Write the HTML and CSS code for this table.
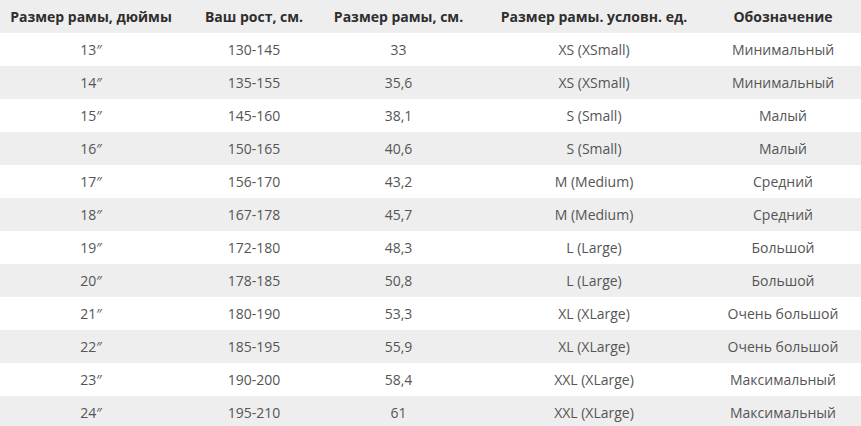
FILE: index.html
```html
<!DOCTYPE html>
<html lang="ru">
<head>
<meta charset="utf-8">
<link rel="stylesheet" href="styles.css">
</head>
<body>
<table class="sizes">
  <colgroup>
    <col class="c1"><col class="c2"><col class="c3"><col class="c4"><col class="c5">
  </colgroup>
  <thead>
    <tr><th>Размер рамы, дюймы</th><th>Ваш рост, см.</th><th>Размер рамы, см.</th><th>Размер рамы. условн. ед.</th><th class="last">Обозначение</th></tr>
  </thead>
  <tbody>
    <tr><td>13″</td><td>130-145</td><td>33</td><td>XS (XSmall)</td><td class="last">Минимальный</td></tr>
    <tr><td>14″</td><td>135-155</td><td>35,6</td><td>XS (XSmall)</td><td class="last">Минимальный</td></tr>
    <tr><td>15″</td><td>145-160</td><td>38,1</td><td>S (Small)</td><td class="last">Малый</td></tr>
    <tr><td>16″</td><td>150-165</td><td>40,6</td><td>S (Small)</td><td class="last">Малый</td></tr>
    <tr><td>17″</td><td>156-170</td><td>43,2</td><td>M (Medium)</td><td class="last">Средний</td></tr>
    <tr><td>18″</td><td>167-178</td><td>45,7</td><td>M (Medium)</td><td class="last">Средний</td></tr>
    <tr><td>19″</td><td>172-180</td><td>48,3</td><td>L (Large)</td><td class="last">Большой</td></tr>
    <tr><td>20″</td><td>178-185</td><td>50,8</td><td>L (Large)</td><td class="last">Большой</td></tr>
    <tr><td>21″</td><td>180-190</td><td>53,3</td><td>XL (XLarge)</td><td class="last">Очень большой</td></tr>
    <tr><td>22″</td><td>185-195</td><td>55,9</td><td>XL (XLarge)</td><td class="last">Очень большой</td></tr>
    <tr><td>23″</td><td>190-200</td><td>58,4</td><td>XXL (XLarge)</td><td class="last">Максимальный</td></tr>
    <tr><td>24″</td><td>195-210</td><td>61</td><td>XXL (XLarge)</td><td class="last">Максимальный</td></tr>
  </tbody>
</table>
</body>
</html>
```

FILE: styles.css
```css
html, body {
  margin: 0;
  padding: 0;
  background: #fff;
}
.sizes {
  width: 861px;
  border-collapse: collapse;
  table-layout: fixed;
  font-family: "Open Sans", "Liberation Sans", sans-serif;
  font-size: 14px;
  color: #555;
}
.c1 { width: 182px; }
.c2 { width: 144px; }
.c3 { width: 145px; }
.c4 { width: 246px; }
.c5 { width: 144px; }
.sizes th, .sizes td {
  height: 33px;
  padding: 0;
  text-align: center;
  white-space: nowrap;
}
.sizes th {
  background: #eeeeee;
  color: #2e2e2e;
  font-weight: 700;
  font-size: 14px;
}
.sizes .last { padding-right: 12px; }
.sizes tbody tr:nth-child(even) td { background: #eeeeee; }
```
